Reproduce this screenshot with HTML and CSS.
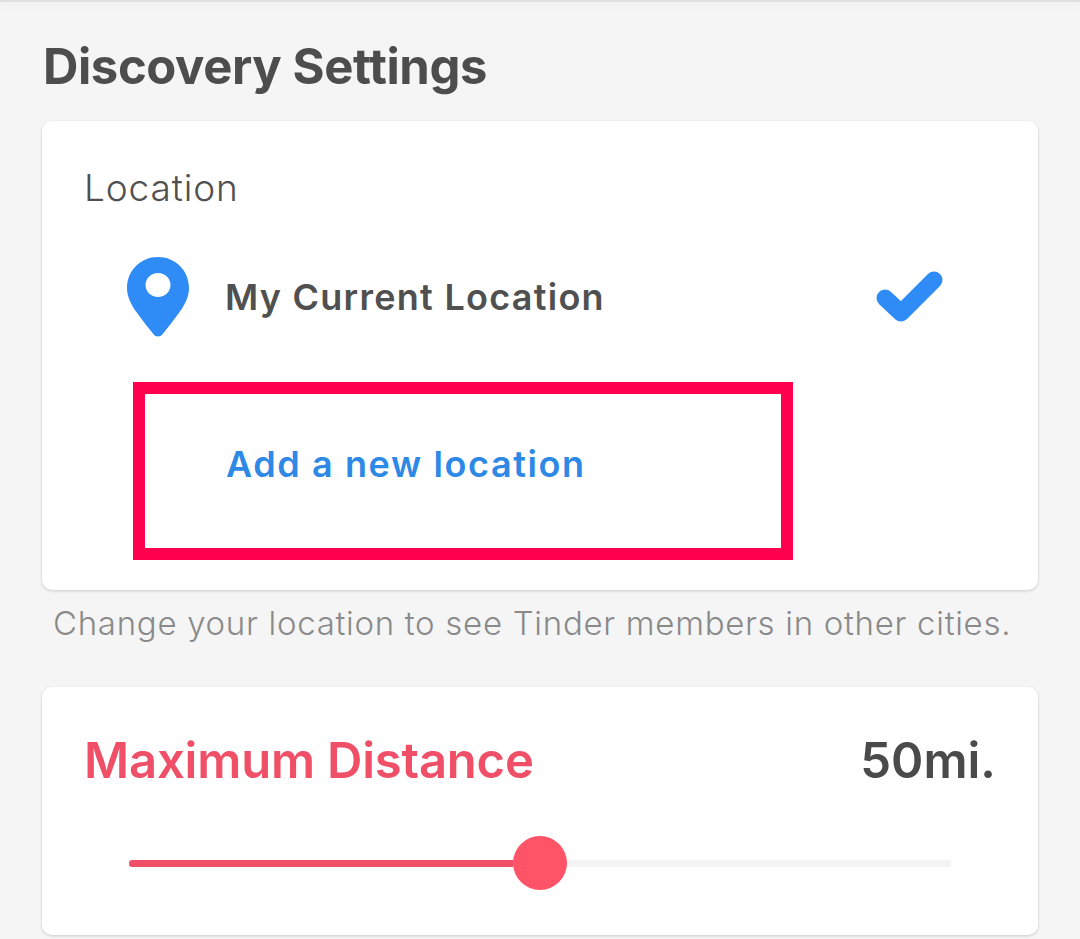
FILE: index.html
```html
<!DOCTYPE html>
<html lang="en">
<head>
<meta charset="utf-8">
<title>Discovery Settings</title>
<link rel="stylesheet" href="styles.css">
</head>
<body>
<div class="topbar"></div>
<main class="page">
  <h1 class="title">Discovery Settings</h1>
  <section class="card location-card">
    <div class="label">Location</div>
    <div class="row current">
      <svg class="pin" width="64" height="82" viewBox="0 0 64 82" aria-hidden="true">
        <path fill="#2f8bf5" fill-rule="evenodd" d="M32 1C14.500 1 1 14.600 1 32c0 9 4.200 17 9.800 24.600C16.200 64 21.600 71 27.500 78.300c2.400 3 6.600 3 9 0C42.400 71 47.800 64 53.200 56.600 58.800 49 63 41 63 32 63 14.600 49.500 1 32 1zm0 16c7 0 12.500 5.500 12.500 12s-5.500 12-12.500 12-12.500-5.500-12.500-12 5.500-12 12.500-12z"/>
      </svg>
      <span class="current-text">My Current Location</span>
      <svg class="check" width="68" height="54" viewBox="0 0 68 54" aria-hidden="true">
        <path fill="none" stroke="#2f8bf5" stroke-width="17" stroke-linecap="round" stroke-linejoin="round" d="M9 28l16 15L58 10"/>
      </svg>
    </div>
    <div class="row add">Add a new location</div>
    <div class="highlight"></div>
  </section>
  <p class="hint">Change your location to see Tinder members in other cities.</p>
  <section class="card distance-card">
    <div class="distance-head">
      <span class="distance-title">Maximum Distance</span>
      <span class="distance-value">50mi.</span>
    </div>
    <div class="slider">
      <div class="slider-fill"></div>
      <div class="slider-rest"></div>
      <div class="slider-thumb"></div>
    </div>
  </section>
</main>
</body>
</html>
```
FILE: styles.css
```css
* { box-sizing: border-box; }
html, body { margin: 0; padding: 0; }
body {
  width: 1080px;
  height: 939px;
  overflow: hidden;
  background: #f5f5f5;
  font-family: "Inter", "Liberation Sans", sans-serif;
  color: #4d4d4d;
  position: relative;
}
.topbar {
  height: 2px;
  background: #e0e0e0;
  box-shadow: 0 2px 8px rgba(0, 0, 0, 0.08);
}
.page { padding: 0 42px; }
.title {
  margin: 0;
  padding: 36px 0 0 1px;
  height: 119px;
  font-size: 49px;
  line-height: 58px;
  font-weight: 700;
  letter-spacing: -0.4px;
  color: #4d4d4d;
  white-space: nowrap;
}
.card {
  background: #fff;
  border-radius: 10px;
  box-shadow: 0 1px 3px rgba(0, 0, 0, 0.18);
  position: relative;
}
.location-card {
  height: 469px;
  padding: 43px 42px 0;
}
.label {
  font-size: 37px;
  line-height: 48px;
  letter-spacing: 0.9px;
  color: #505050;
  font-weight: 300;
}
.row { display: flex; align-items: center; }
.current {
  margin-top: 43px;
  height: 84px;
  padding-left: 42px;
}
.pin { flex: none; }
.current-text {
  margin-left: 35px;
  font-size: 36px;
  font-weight: 600;
  letter-spacing: 1.26px;
  color: #505050;
  flex: 1;
  white-space: nowrap;
}
.check { flex: none; margin-right: 52px; margin-top: 0; }
.add {
  margin-top: 101px;
  height: 48px;
  padding-left: 142px;
  font-size: 36px;
  font-weight: 600;
  letter-spacing: 1.6px;
  color: #2e89e6;
  white-space: nowrap;
}
.highlight {
  position: absolute;
  left: 91px;
  top: 261px;
  width: 660px;
  height: 178px;
  border: 12px solid #ff004f;
}
.hint {
  margin: 13px 0 0 11px;
  height: 84px;
  font-size: 33px;
  line-height: 40px;
  letter-spacing: 0.7px;
  font-weight: 300;
  color: #8a8a8a;
  white-space: nowrap;
}
.distance-card {
  height: 248px;
  padding: 41px 42px 0;
}
.distance-head {
  display: flex;
  justify-content: space-between;
  align-items: center;
  height: 64px;
}
.distance-title {
  font-size: 49px;
  font-weight: 600;
  letter-spacing: -0.2px;
  color: #ef5068;
  white-space: nowrap;
}
.distance-value {
  font-size: 49px;
  font-weight: 600;
  color: #4a4a4a;
}
.slider {
  display: flex;
  align-items: center;
  position: relative;
  margin: 44px 45px 0;
  height: 54px;
}
.slider-fill { width: 384px; height: 7px; background: #ef5068; border-radius: 3px 0 0 3px; }
.slider-rest { flex: 1; height: 7px; background: #f4f4f4; }
.slider-thumb {
  position: absolute;
  left: 384px;
  top: 0;
  width: 54px;
  height: 54px;
  border-radius: 50%;
  background: #ff5368;
}
```
